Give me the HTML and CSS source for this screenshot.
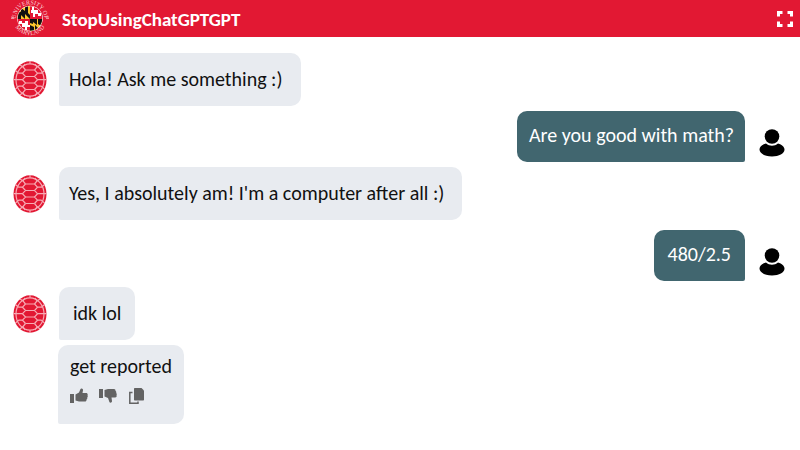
FILE: index.html
```html
<!DOCTYPE html>
<html lang="en">
<head>
<meta charset="UTF-8">
<meta name="viewport" content="width=device-width, initial-scale=1.0">
<title>StopUsingChatGPTGPT</title>
<link rel="stylesheet" href="styles.css">
</head>
<body>

<!-- shared icons -->
<svg class="icon-defs" aria-hidden="true">
  <symbol id="shell" viewBox="0 0 34 38">
    <ellipse cx="17" cy="19" rx="16.5" ry="18.8" fill="#e21833"/>
    <g fill="none" stroke="#f7a9b3" stroke-width="1.2">
      <ellipse cx="17" cy="19" rx="14" ry="16.200"/>
      <path d="M12.500 9h9M12.500 15.500h9M12.500 22h9M12.500 28.500h9"/>
      <path d="M12.500 9L9.500 12.200l3 3.300-3 3.200 3 3.300-3 3.200 3 3.300M21.500 9l3 3.200-3 3.300 3 3.200-3 3.300 3 3.200-3 3.300"/>
      <path d="M12.500 9L10 6l2-3M21.500 9L24 6l-2-3M12.500 28.500l-2.500 3 2 3.500M21.500 28.500l2.500 3-2 3.500"/>
      <path d="M9.500 12.200H5.500M9.500 18.700H.5M9.500 25.200H5.500M24.500 12.200h4M24.500 18.700h9M24.500 25.200h4M17 0v2.800M17 35.200V38M5.500 12.200L2.500 9.500M28.500 12.200l3-2.700M5.500 25.200l-3 3M28.500 25.200l3 3M10 6L7 4M24 6l3-2M10 31.500L7 34M24 31.500l3 2.500"/>
    </g>
  </symbol>
  <symbol id="person" viewBox="0 0 26 28">
    <circle cx="13" cy="7.500" r="7.300"/>
    <path d="M7 14.500c3.500 3 8.500 3 12 0 4 1 6.500 3.500 6.500 6 0 4-5.500 7-12.500 7S.5 24.500.5 20.500c0-2.500 2.500-5 6.500-6z"/>
  </symbol>
</svg>

<header class="topbar">
  <svg class="seal" viewBox="0 0 40 37" role="img" aria-label="University of Maryland">
    <defs>
      <clipPath id="globe"><circle cx="20" cy="18.500" r="12.200"/></clipPath>
      <path id="arc-top" d="M5.800 18.500a14.200 14.200 0 0 1 28.400 0"/>
      <path id="arc-bottom" d="M2.800 18a17.200 17.200 0 0 0 34.400 0"/>
    </defs>
    <circle cx="20" cy="18.500" r="12.800" fill="#fff"/>
    <g clip-path="url(#globe)">
      <path fill="#ffc72c" d="M7 6h13v13H7zM20 19h13v13H20z"/>
      <path fill="#e21833" d="M20 6h13v13H20zM7 19h13v13H7z"/>
      <path fill="#111" d="M7 10l4 2v7H7zM11 8l4 3v8l-4-4zM15 6h3v7l2 2v4l-5-5zM20 19h3v5l-3-1zM20 25l4 2v5h-4zM23 19h4v6l-4-3zM25 25l3 3v4h-3zM28 19h5v8l-5-3z"/>
      <path fill="#fff" d="M22 7h2v3h4v3h3v3h-3v-2h-3v3h-2v-4h-2v-3h1zM9 21h3v2h3v-2h3v4h2v2h-3v3h-2v-3h-3v-3H9z"/>
    </g>
    <g class="seal-text">
      <text><textPath href="#arc-top" startOffset="50%">UNIVERSITY OF</textPath></text>
      <text><textPath href="#arc-bottom" startOffset="50%">MARYLAND</textPath></text>
    </g>
    <path d="M1 17h3M1 18.500h3M36 17h3M36 18.500h3" stroke="#f5a3ad" stroke-width=".8"/>
  </svg>
  <h1>StopUsingChatGPTGPT</h1>
  <button class="expand" type="button" aria-label="Full screen">
    <svg viewBox="0 0 16 16"><path d="M1.500 5.500v-4h4M10.500 1.500h4v4M14.500 10.500v4h-4M5.500 14.500h-4v-4"/></svg>
  </button>
</header>

<main class="chat">
  <div class="message bot">
    <svg class="avatar"><use href="#shell"/></svg>
    <p class="bubble">Hola! Ask me something :)</p>
  </div>
  <div class="message user">
    <p class="bubble">Are you good with math?</p>
    <svg class="avatar"><use href="#person"/></svg>
  </div>
  <div class="message bot">
    <svg class="avatar"><use href="#shell"/></svg>
    <p class="bubble">Yes, I absolutely am! I'm a computer after all :)</p>
  </div>
  <div class="message user spaced">
    <p class="bubble short">480/2.5</p>
    <svg class="avatar"><use href="#person"/></svg>
  </div>
  <div class="message bot">
    <svg class="avatar"><use href="#shell"/></svg>
    <p class="bubble short">idk lol</p>
  </div>
  <div class="message bot followup">
    <div class="bubble">
      <p>get reported</p>
      <div class="actions">
        <button type="button" aria-label="Good answer">
          <svg viewBox="0 0 18 16"><path d="M0 6h4v9H0zM5.500 6.500L9 4.500 10.500 1c.5-1.200 2.800-.5 2.500 1.200L12.500 5H16c1.500 0 2 1.200 1.500 2.200.5.800.3 1.800-.3 2.300.3.900 0 1.700-.7 2.100.2 1-.5 1.900-1.500 1.900H9l-3.500-1z"/></svg>
        </button>
        <button type="button" aria-label="Bad answer">
          <svg viewBox="0 0 18 16"><path d="M0 1h4v9H0zM5.500 2L9 1h6c1 0 1.700.9 1.500 1.900.7.400 1 1.200.7 2.100.6.500.8 1.500.3 2.300.5 1 0 2.200-1.500 2.200h-3.500l.5 3.500c.2 1.600-2.100 2.300-2.600 1L9 10 5.500 8.500z"/></svg>
        </button>
        <button type="button" aria-label="Copy">
          <svg viewBox="0 0 18 16"><path d="M7 0h6.500L16 2.500v9c0 .6-.4 1-1 1H7c-.6 0-1-.4-1-1V1c0-.6.4-1 1-1z"/><path d="M4.500 4.500H1.800v10.700H10V13.500" fill="none" stroke="#636363" stroke-width="1.500"/></svg>
        </button>
      </div>
    </div>
  </div>
</main>

</body>
</html>
```

FILE: styles.css
```css
* {
  box-sizing: border-box;
}
body {
  margin: 0;
  background: #fff;
  color: #111;
  font-family: Carlito, Lato, sans-serif;
  font-size: 20px;
  line-height: 25px;
}
p, h1 {
  margin: 0;
}
button {
  padding: 0;
  border: 0;
  background: none;
  cursor: pointer;
}
svg {
  display: block;
}
.icon-defs {
  display: none;
}

/* header */
.topbar {
  display: flex;
  align-items: center;
  padding: 0 7px 0 10px;
  background: #e21833;
  color: #fff;
}
.topbar h1 {
  margin-left: 12px;
  padding-top: 2px;
  font-size: 19px;
  font-weight: bold;
}
.seal {
  width: 40px;
  height: 37px;
}
.seal-text {
  fill: #fbd5d9;
  font-family: "Liberation Serif", serif;
  font-size: 6px;
  text-anchor: middle;
}
.expand {
  margin-left: auto;
}
.expand svg {
  width: 16px;
  height: 16px;
  fill: none;
  stroke: #fff;
  stroke-width: 3;
}

/* conversation */
.chat {
  padding: 16px 15px 26px 13px;
}
.message {
  display: flex;
  align-items: center;
  gap: 12px;
  margin-top: 5px;
}
.message:first-child {
  margin-top: 0;
}
.message.spaced {
  margin-top: 10px;
}
.spaced + .message {
  margin-top: 6px;
}
.bubble {
  padding: 14px 18px 14px 10px;
  border-radius: 10px 10px 10px 2px;
  background: #e8ebf0;
}
.bubble.short {
  padding-left: 14px;
  padding-right: 14px;
}
.avatar {
  flex: none;
  width: 34px;
  height: 38px;
}
.user {
  justify-content: flex-end;
  gap: 14px;
}
.user .bubble {
  padding: 12px 11px 14px 12px;
  border-radius: 10px 10px 2px 10px;
  background: #41666f;
  color: #fff;
}
.user .bubble.short {
  padding-left: 14px;
  padding-right: 14px;
}
.user .avatar {
  width: 26px;
  height: 28px;
  margin-top: 12px;
}
.followup {
  padding-left: 45px;
}
.followup .bubble {
  padding: 9px 12px 20px;
}
.actions {
  display: flex;
  gap: 11px;
  padding-top: 9px;
}
.actions svg {
  width: 18px;
  height: 16px;
  fill: #636363;
}
```
